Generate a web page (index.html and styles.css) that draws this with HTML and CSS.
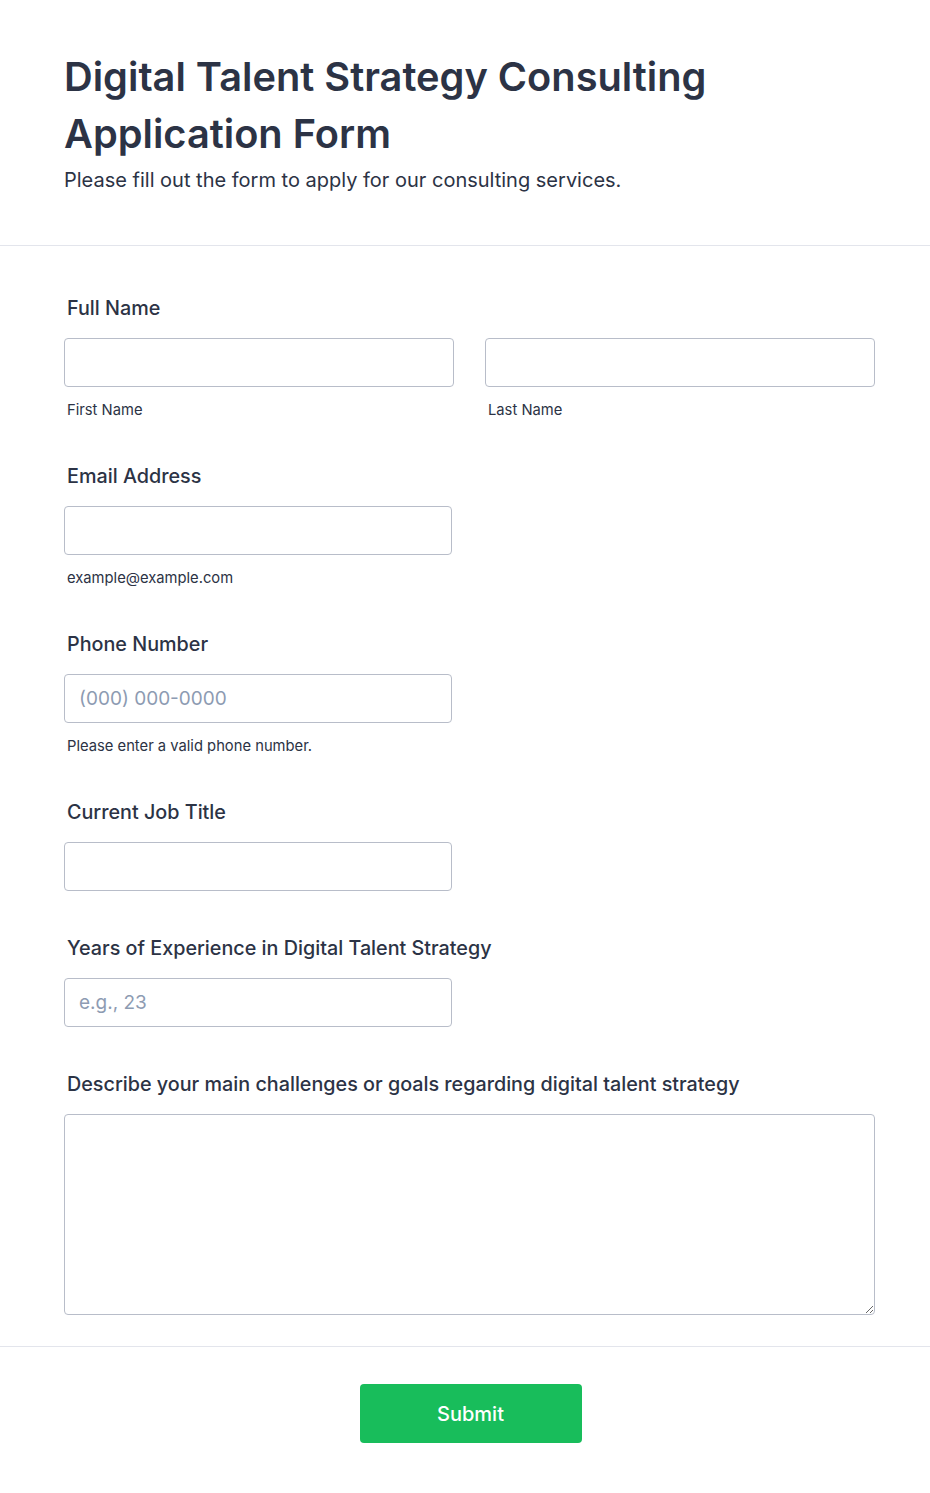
FILE: index.html
```html
<!DOCTYPE html>
<html lang="en">
<head>
<meta charset="utf-8">
<title>Digital Talent Strategy Consulting Application Form</title>
<link rel="stylesheet" href="styles.css">
</head>
<body>
<form class="form">
  <header class="header">
    <h1 class="title">Digital Talent Strategy Consulting Application Form</h1>
    <p class="subtitle">Please fill out the form to apply for our consulting services.</p>
  </header>
  <div class="body">
    <div class="field">
      <label class="label">Full Name</label>
      <div class="name-row">
        <div class="name-col">
          <input class="input" type="text">
          <span class="sublabel">First Name</span>
        </div>
        <div class="name-col">
          <input class="input" type="text">
          <span class="sublabel">Last Name</span>
        </div>
      </div>
    </div>
    <div class="field">
      <label class="label">Email Address</label>
      <input class="input input-half" type="email">
      <span class="sublabel">example@example.com</span>
    </div>
    <div class="field">
      <label class="label">Phone Number</label>
      <input class="input input-half" type="tel" placeholder="(000) 000-0000">
      <span class="sublabel">Please enter a valid phone number.</span>
    </div>
    <div class="field">
      <label class="label">Current Job Title</label>
      <input class="input input-half" type="text">
    </div>
    <div class="field">
      <label class="label">Years of Experience in Digital Talent Strategy</label>
      <input class="input input-half" type="text" placeholder="e.g., 23">
    </div>
    <div class="field field-last">
      <label class="label">Describe your main challenges or goals regarding digital talent strategy</label>
      <textarea class="textarea"></textarea>
    </div>
  </div>
  <div class="footer">
    <button class="submit" type="button">Submit</button>
  </div>
</form>
</body>
</html>
```
FILE: styles.css
```css
* {
  box-sizing: border-box;
}

html, body {
  margin: 0;
  padding: 0;
  background: #ffffff;
}

body {
  font-family: Inter, "Noto Sans", "Liberation Sans", sans-serif;
  color: #2c3345;
}

.form {
  width: 930px;
}

.header {
  padding: 48px 55px 53px 64px;
  border-bottom: 1px solid #e3e5ec;
}

.title {
  margin: 0;
  font-size: 39.75px;
  line-height: 57px;
  font-weight: 600;
  color: #2c3345;
}

.subtitle {
  margin: 6px 0 0 0;
  font-size: 20px;
  line-height: 24px;
  font-weight: 400;
  color: #2c3345;
}

.body {
  padding: 50px 55px 0 64px;
}

.field {
  display: flex;
  flex-direction: column;
  align-items: flex-start;
  padding-bottom: 45px;
}

.field-last {
  padding-bottom: 31px;
}

.label {
  display: block;
  padding-left: 3px;
  margin-bottom: 18px;
  font-size: 19.75px;
  line-height: 24px;
  font-weight: 500;
  color: #2c3345;
}

.name-row {
  display: flex;
  gap: 31px;
  width: 100%;
}

.name-col {
  flex: 1;
  display: flex;
  flex-direction: column;
}

.input {
  display: block;
  width: 100%;
  height: 49px;
  padding: 0 14px;
  border: 1px solid #b8bdc9;
  border-radius: 4px;
  background: #ffffff;
  font-family: Inter, "Noto Sans", "Liberation Sans", sans-serif;
  font-size: 19px;
  color: #2c3345;
  outline: none;
}

.input::placeholder {
  color: #8d9bb2;
}

.input-half {
  width: 388px;
}

.sublabel {
  display: block;
  margin-top: 14px;
  margin-bottom: 0;
  padding-left: 3px;
  font-size: 14.75px;
  line-height: 18px;
  color: #2c3345;
}

.textarea {
  display: block;
  width: 100%;
  height: 201px;
  padding: 10px 14px;
  border: 1px solid #b8bdc9;
  border-radius: 4px;
  background: #ffffff;
  font-family: Inter, "Noto Sans", "Liberation Sans", sans-serif;
  font-size: 18px;
  color: #2c3345;
  outline: none;
}

.footer {
  border-top: 1px solid #e3e5ec;
  padding: 37px 0 51px 0;
  display: flex;
  justify-content: center;
}

.submit {
  width: 222px;
  height: 59px;
  margin-left: 11px;
  border: none;
  border-radius: 4px;
  background: #18bd5b;
  color: #ffffff;
  font-family: Inter, "Noto Sans", "Liberation Sans", sans-serif;
  font-size: 20px;
  font-weight: 500;
  cursor: pointer;
}
```
